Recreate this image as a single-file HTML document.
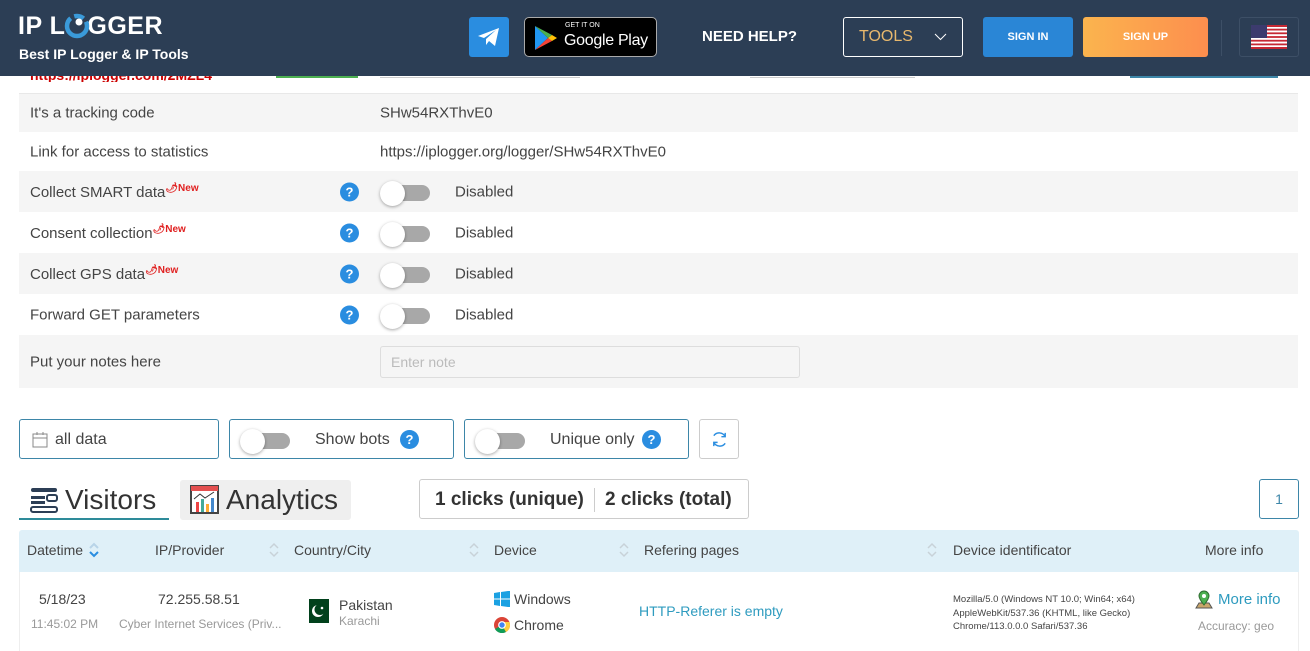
<!DOCTYPE html>
<html><head><meta charset="utf-8"><style>
*{box-sizing:border-box;margin:0;padding:0}
body{width:1310px;height:651px;overflow:hidden;background:#fff;font-family:"Liberation Sans",sans-serif;color:#333;position:relative}
.a{position:absolute;white-space:nowrap}
.hdr{left:0;top:0;width:1310px;height:76px;background:#2c3e55}
.row{position:absolute;left:19px;width:1279px;font-size:15px;color:#444}
.row span{position:absolute;top:50%;transform:translateY(-50%);white-space:nowrap}
.row span span{position:static;transform:none}
.g{background:#f5f5f5}
.q{width:19px;height:19px;border-radius:50%;background:#2a8de0;color:#fff;font-size:13px;font-weight:bold;text-align:center;line-height:19px}
.tg{width:50px;height:20px}
.tg .tr{position:absolute;left:8px;top:3px;width:42px;height:16px;border-radius:8px;background:#a8a8a8}
.tg .kn{position:absolute;left:0;top:-1px;width:25px;height:25px;border-radius:50%;background:#fff;box-shadow:0 1px 3px rgba(0,0,0,.35)}
.new{color:#e02020;font-size:10px;font-weight:bold;vertical-align:6px}
.box{border:1px solid #3d86a8;border-radius:3px;background:#fff}
.th{font-size:14px;color:#444;top:542px}
</style></head><body>
<div class="a" style="left:30px;top:76px;width:220px;height:6px;overflow:hidden"><div style="color:#c00;font-size:14px;font-weight:bold;margin-top:-9px">https://iplogger.com/2MZL4</div></div>
<div class="a" style="left:276px;top:76px;width:82px;height:2px;background:#4caf50"></div>
<div class="a" style="left:380px;top:76px;width:200px;height:2px;border-bottom:1px solid #ccc"></div>
<div class="a" style="left:750px;top:76px;width:165px;height:2px;border-bottom:1px solid #ccc"></div>
<div class="a" style="left:1130px;top:76px;width:148px;height:2px;background:#3d86a8"></div>

<div class="row" style="top:93px;height:1px;background:#e8e8e8"></div>
<div class="row g" style="top:94px;height:38px"><span style="left:11px">It's a tracking code</span><span style="left:361px">SHw54RXThvE0</span></div>
<div class="row" style="top:132px;height:39px"><span style="left:11px">Link for access to statistics</span><span style="left:361px">https://iplogger.org/logger/SHw54RXThvE0</span></div>
<div class="row g" style="top:171px;height:41px"><span style="left:11px">Collect SMART data<span class="new">🌶New</span></span><span class="q" style="left:321px">?</span><span class="tg" style="left:361px;position:absolute"><i class="tr"></i><i class="kn"></i></span><span style="left:436px">Disabled</span></div>
<div class="row" style="top:212px;height:41px"><span style="left:11px">Consent collection<span class="new">🌶New</span></span><span class="q" style="left:321px">?</span><span class="tg" style="left:361px;position:absolute"><i class="tr"></i><i class="kn"></i></span><span style="left:436px">Disabled</span></div>
<div class="row g" style="top:253px;height:41px"><span style="left:11px">Collect GPS data<span class="new">🌶New</span></span><span class="q" style="left:321px">?</span><span class="tg" style="left:361px;position:absolute"><i class="tr"></i><i class="kn"></i></span><span style="left:436px">Disabled</span></div>
<div class="row" style="top:294px;height:41px"><span style="left:11px">Forward GET parameters</span><span class="q" style="left:321px">?</span><span class="tg" style="left:361px;position:absolute"><i class="tr"></i><i class="kn"></i></span><span style="left:436px">Disabled</span></div>
<div class="row g" style="top:335px;height:53px"><span style="left:11px">Put your notes here</span><span style="left:361px;width:420px;height:32px;border:1px solid #ddd;background:#f5f5f5;border-radius:3px;font-size:14px;color:#bbb;padding:7px 10px">Enter note</span></div>

<div class="a box" style="left:19px;top:419px;width:200px;height:40px"><svg class="a" style="left:12px;top:11px" width="16" height="17" viewBox="0 0 16 17" fill="none" stroke="#888"><rect x="1" y="3" width="14" height="13"/><line x1="1" y1="7" x2="15" y2="7"/><line x1="5" y1="1" x2="5" y2="4"/><line x1="11" y1="1" x2="11" y2="4"/></svg><span class="a" style="left:35px;top:11px;font-size:16px;color:#444">all data</span></div>
<div class="a box" style="left:229px;top:419px;width:225px;height:40px"><span class="tg a" style="left:10px;top:10px"><i class="tr"></i><i class="kn"></i></span><span class="a" style="left:85px;top:11px;font-size:16px;color:#444">Show bots</span><span class="q a" style="left:170px;top:10px">?</span></div>
<div class="a box" style="left:464px;top:419px;width:225px;height:40px"><span class="tg a" style="left:10px;top:10px"><i class="tr"></i><i class="kn"></i></span><span class="a" style="left:85px;top:11px;font-size:16px;color:#444">Unique only</span><span class="q a" style="left:177px;top:10px">?</span></div>
<div class="a" style="left:699px;top:419px;width:40px;height:40px;border:1px solid #ccc;border-radius:3px"><svg class="a" style="left:10px;top:10px" width="19" height="19" viewBox="0 0 20 20" fill="none" stroke="#2a8de0" stroke-width="1.5"><path d="M16 7A7 7 0 0 0 4 6M4 13a7 7 0 0 0 12 1"/><path d="M16 3v4h-4M4 17v-4h4"/></svg></div>

<div class="a" style="left:19px;top:480px;width:150px;height:40px;border-bottom:2px solid #2e8b9a"></div>
<svg class="a" style="left:30px;top:486px" width="28" height="28" viewBox="0 0 28 28"><rect x="1" y="2" width="26" height="4" rx="2" fill="#2c3e55"/><rect x="1" y="10" width="14" height="3" fill="#2c3e55"/><rect x="17" y="9" width="10" height="6" rx="2" fill="none" stroke="#2c3e55" stroke-width="2"/><rect x="1" y="15" width="14" height="3" fill="#2c3e55"/><rect x="1" y="21" width="26" height="5" rx="2" fill="none" stroke="#2c3e55" stroke-width="2"/></svg>
<span class="a" style="left:65px;top:484px;font-size:28px;color:#333">Visitors</span>
<div class="a" style="left:180px;top:480px;width:171px;height:40px;background:#efefef;border-radius:3px"></div>
<svg class="a" style="left:190px;top:485px" width="29" height="29" viewBox="0 0 29 29"><rect x="1" y="1" width="27" height="27" fill="#fff" stroke="#444" stroke-width="2"/><rect x="1" y="1" width="27" height="5" fill="#e45050"/><rect x="6" y="17" width="3" height="10" fill="#e44"/><rect x="11" y="14" width="3" height="13" fill="#4a9"/><rect x="16" y="19" width="3" height="8" fill="#fa3"/><rect x="21" y="13" width="3" height="14" fill="#48c"/><path d="M4 14l6-5 5 4 9-6" stroke="#333" fill="none"/></svg>
<span class="a" style="left:226px;top:484px;font-size:28px;color:#333">Analytics</span>
<div class="a" style="left:419px;top:479px;width:330px;height:40px;border:1px solid #ccc;border-radius:3px"><span class="a" style="left:15px;top:9px;font-size:19px;font-weight:bold;color:#333">1 clicks (unique)</span><span class="a" style="left:174px;top:8px;width:1px;height:24px;background:#ccc"></span><span class="a" style="left:185px;top:9px;font-size:19px;font-weight:bold;color:#333">2 clicks (total)</span></div>
<div class="a box" style="left:1259px;top:479px;width:40px;height:40px;color:#3d86a8;font-size:14px;text-align:center;line-height:38px">1</div>

<div class="a" style="left:19px;top:530px;width:1280px;height:42px;background:#dff0f8;border-radius:3px 3px 0 0"></div>
<span class="a th" style="left:27px">Datetime</span>
<svg class="a" style="left:88px;top:541px" width="12" height="18" viewBox="0 0 12 18"><path d="M2 7l4-4 4 4" stroke="#b8d4e8" stroke-width="2" fill="none"/><path d="M2 11l4 4 4-4" stroke="#2a8de0" stroke-width="2" fill="none"/></svg>
<span class="a th" style="left:155px">IP/Provider</span>
<span class="a th" style="left:294px">Country/City</span>
<span class="a th" style="left:494px">Device</span>
<span class="a th" style="left:644px">Refering pages</span>
<span class="a th" style="left:953px">Device identificator</span>
<span class="a th" style="left:1205px">More info</span>
<svg class="a" style="left:268px;top:541px" width="12" height="18"><path d="M2 7l4-4 4 4M2 11l4 4 4-4" stroke="#c8d2d8" stroke-width="1.5" fill="none"/></svg>
<svg class="a" style="left:468px;top:541px" width="12" height="18"><path d="M2 7l4-4 4 4M2 11l4 4 4-4" stroke="#c8d2d8" stroke-width="1.5" fill="none"/></svg>
<svg class="a" style="left:618px;top:541px" width="12" height="18"><path d="M2 7l4-4 4 4M2 11l4 4 4-4" stroke="#c8d2d8" stroke-width="1.5" fill="none"/></svg>
<svg class="a" style="left:926px;top:541px" width="12" height="18"><path d="M2 7l4-4 4 4M2 11l4 4 4-4" stroke="#c8d2d8" stroke-width="1.5" fill="none"/></svg>
<div class="a" style="left:19px;top:572px;width:1280px;height:79px;border-left:1px solid #eee;border-right:1px solid #eee"></div>
<span class="a" style="left:39px;top:591px;font-size:14px;color:#444">5/18/23</span>
<span class="a" style="left:31px;top:617px;font-size:12px;color:#999">11:45:02 PM</span>
<span class="a" style="left:158px;top:591px;font-size:14px;color:#444">72.255.58.51</span>
<span class="a" style="left:119px;top:617px;font-size:12px;color:#999">Cyber Internet Services (Priv...</span>
<svg class="a" style="left:303px;top:599px" width="26" height="24" viewBox="0 0 26 24"><rect width="26" height="24" fill="#fff"/><rect x="6" width="20" height="24" fill="#01411c"/><circle cx="15" cy="12" r="6" fill="#fff"/><circle cx="17" cy="10.5" r="5.5" fill="#01411c"/><circle cx="19" cy="9" r="1.3" fill="#fff"/></svg>
<span class="a" style="left:339px;top:597px;font-size:14px;color:#444">Pakistan</span>
<span class="a" style="left:339px;top:614px;font-size:12px;color:#999">Karachi</span>
<svg class="a" style="left:494px;top:591px" width="16" height="16" viewBox="0 0 16 16" fill="#1ba1e2"><path d="M0 2l6-1v6.5H0zM7 1l9-1.3v7.8H7zM0 8.5h6V15l-6-1zM7 8.5h9v7.8L7 15z"/></svg>
<span class="a" style="left:514px;top:591px;font-size:14px;color:#444">Windows</span>
<svg class="a" style="left:494px;top:617px" width="16" height="16" viewBox="0 0 16 16"><circle cx="8" cy="8" r="8" fill="#db4437"/><path d="M8 8L1 12A8 8 0 0 0 12 15z" fill="#0f9d58"/><path d="M8 8l4 7A8 8 0 0 0 15.5 5H8z" fill="#ffcd40"/><circle cx="8" cy="8" r="3.3" fill="#4285f4" stroke="#fff" stroke-width="1.2"/></svg>
<span class="a" style="left:514px;top:617px;font-size:14px;color:#444">Chrome</span>
<span class="a" style="left:639px;top:603px;font-size:14px;color:#2e9bbf">HTTP-Referer is empty</span>
<div class="a" style="left:953px;top:593px;font-size:9.5px;color:#444;line-height:13.5px">Mozilla/5.0 (Windows NT 10.0; Win64; x64)<br>AppleWebKit/537.36 (KHTML, like Gecko)<br>Chrome/113.0.0.0 Safari/537.36</div>
<svg class="a" style="left:1194px;top:590px" width="20" height="20" viewBox="0 0 20 20"><path d="M2 18l3-5h10l3 5z" fill="#c9a66b" stroke="#555"/><path d="M10 15C6 10 5 8 5 6a5 5 0 0 1 10 0c0 2-1 4-5 9z" fill="#4caf50" stroke="#2e6b30"/><circle cx="10" cy="6" r="2" fill="#fff"/></svg>
<span class="a" style="left:1218px;top:591px;font-size:15px;color:#2e9bbf">More info</span>
<span class="a" style="left:1198px;top:619px;font-size:12px;color:#999">Accuracy: geo</span>

<div class="a hdr"></div>
<div class="a" style="left:18px;top:12px;font-size:25px;font-weight:bold;color:#fff;letter-spacing:0.5px">IP L<span style="display:inline-block;width:22px"></span>GGER</div>
<svg class="a" style="left:64px;top:12px" width="26" height="28" viewBox="0 0 26 28"><circle cx="13" cy="14" r="10" fill="none" stroke="#3a9ad9" stroke-width="4.5" stroke-dasharray="40 4 10 4"/><circle cx="15" cy="10" r="3.5" fill="#fff"/></svg>
<div class="a" style="left:19px;top:46px;font-size:14px;font-weight:bold;color:#fff">Best IP Logger &amp; IP Tools</div>
<div class="a" style="left:469px;top:17px;width:40px;height:40px;background:#2a8de0;border-radius:3px"><svg class="a" style="left:8px;top:9px" width="24" height="22" viewBox="0 0 24 22"><path d="M1 10L22 2l-4 18-6-5-3 4v-6l10-9-12 8z" fill="#fff"/></svg></div>
<div class="a" style="left:524px;top:17px;width:133px;height:40px;background:#000;border:1px solid #aaa;border-radius:5px"><svg class="a" style="left:9px;top:7px" width="24" height="26" viewBox="0 0 24 26"><path d="M1 1l13 12L1 25z" fill="#2196f3"/><path d="M1 1l17 9-4 3z" fill="#4caf50"/><path d="M1 25l17-9-4-3z" fill="#f44336"/><path d="M18 10l5 3-5 3-4-3z" fill="#ffc107"/></svg><span class="a" style="left:40px;top:4px;font-size:7px;color:#fff">GET IT ON</span><span class="a" style="left:39px;top:14px;font-size:16px;color:#fff;letter-spacing:-0.3px">Google Play</span></div>
<div class="a" style="left:702px;top:28px;font-size:15px;font-weight:bold;color:#fff">NEED HELP?</div>
<div class="a" style="left:843px;top:17px;width:120px;height:40px;border:1px solid #fff;border-radius:3px"><span class="a" style="left:15px;top:10px;font-size:16px;color:#e8b86d">TOOLS</span><svg class="a" style="left:90px;top:15px" width="13" height="8"><path d="M1 1l5.5 5.5L12 1" stroke="#fff" fill="none"/></svg></div>
<div class="a" style="left:983px;top:17px;width:90px;height:40px;background:#2a86d6;border-radius:3px;color:#fff;font-size:11px;font-weight:bold;text-align:center;line-height:40px">SIGN IN</div>
<div class="a" style="left:1083px;top:17px;width:125px;height:40px;background:linear-gradient(90deg,#fbb44e,#fd8e4e);border-radius:3px;color:#fff;font-size:11px;font-weight:bold;text-align:center;line-height:40px">SIGN UP</div>
<div class="a" style="left:1221px;top:20px;width:1px;height:36px;background:#3d4f66"></div>
<div class="a" style="left:1239px;top:17px;width:60px;height:40px;border:1px solid #3d4f66;border-radius:3px"></div>
<svg class="a" style="left:1251px;top:25px" width="36" height="24" viewBox="0 0 36 24"><rect width="36" height="24" fill="#fff"/><g fill="#c62833"><rect y="0" width="36" height="2"/><rect y="3.7" width="36" height="1.8"/><rect y="7.4" width="36" height="1.8"/><rect y="11.1" width="36" height="1.8"/><rect y="14.8" width="36" height="1.8"/><rect y="18.5" width="36" height="1.8"/><rect y="22" width="36" height="2"/></g><rect width="16" height="13" fill="#3c3b6e"/></svg>
</body></html>
